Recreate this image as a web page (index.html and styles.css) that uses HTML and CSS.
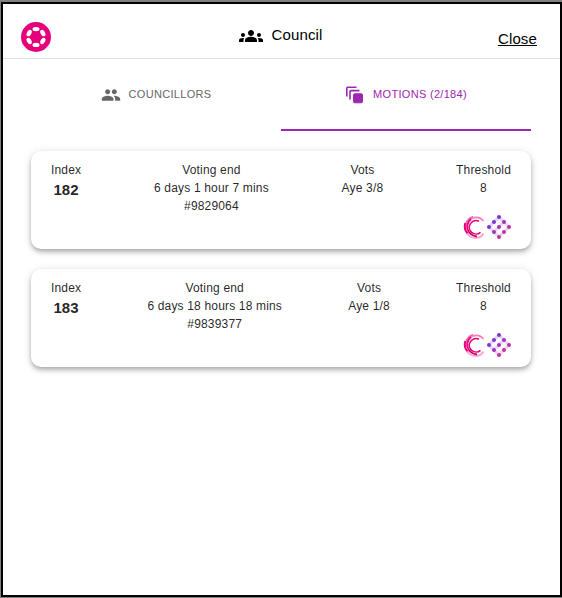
FILE: index.html
```html
<!DOCTYPE html>
<html lang="en">
<head>
<meta charset="utf-8">
<title>Council</title>
<link rel="stylesheet" href="styles.css">
</head>
<body>
<svg class="defs" width="0" height="0" aria-hidden="true">
  <defs>
    <linearGradient id="dots" gradientUnits="userSpaceOnUse" x1="4" y1="4" x2="20" y2="22">
      <stop offset="0" stop-color="#6a35e0"/><stop offset="1" stop-color="#d8358f"/>
    </linearGradient>
    <symbol id="crescent" viewBox="0 0 24 24">
      <g fill="none">
        <path d="M10 1.500A11 11 0 0 0 2.500 14" stroke="#f565ae" stroke-width="1.700"/>
        <path d="M2.300 8A11 11 0 0 0 5 19" stroke="#e6007a" stroke-width="1.900"/>
        <path d="M4 18.500C9 25 18 23.500 20.500 18.500" stroke="#fba6d2" stroke-width="2"/>
        <path d="M20.500 6A9.500 9.500 0 0 0 6 5.500" stroke="#f77dbb" stroke-width="1.600"/>
        <path d="M8 4A9.300 9.300 0 0 0 6 17" stroke="#e6007a" stroke-width="1.900"/>
        <path d="M6 17Q9 21 14 21.500" stroke="#b8005f" stroke-width="1.800"/>
        <path d="M16 6.300A6.700 6.700 0 1 0 17.500 17.300" stroke="#e6007a" stroke-width="1.600"/>
      </g>
    </symbol>
    <symbol id="lattice" viewBox="0 0 24 24">
      <path d="M12 2 2 12M12 2l5 5L7 17 2 12M17 7l5 5-10 10-5-5" fill="none" stroke="url(#dots)" stroke-width="3.200" opacity=".2"/>
      <g fill="url(#dots)">
        <circle cx="12" cy="2" r="2"/><circle cx="7" cy="7" r="2"/><circle cx="17" cy="7" r="2"/>
        <circle cx="2" cy="12" r="2"/><circle cx="12" cy="12" r="2"/><circle cx="22" cy="12" r="2"/>
        <circle cx="7" cy="17" r="2"/><circle cx="17" cy="17" r="2"/><circle cx="12" cy="22" r="2"/>
      </g>
    </symbol>
  </defs>
</svg>
<div class="popup">
  <header class="header">
    <svg class="logo" viewBox="0 0 30 30">
      <circle cx="15" cy="15" r="15" fill="#e6007a"/>
      <g fill="#fff">
        <ellipse id="petal" cx="15" cy="7.100" rx="3.500" ry="2.200"/>
        <use href="#petal" transform="rotate(60 15 15)"/>
        <use href="#petal" transform="rotate(120 15 15)"/>
        <use href="#petal" transform="rotate(180 15 15)"/>
        <use href="#petal" transform="rotate(240 15 15)"/>
        <use href="#petal" transform="rotate(300 15 15)"/>
      </g>
    </svg>
    <h1 class="title">
      <svg width="24" height="24" viewBox="0 0 24 24"><path d="M12 12.750c1.630 0 3.070.390 4.240.900 1.080.480 1.760 1.560 1.760 2.730V18H6v-1.610c0-1.180.680-2.260 1.760-2.730 1.170-.520 2.610-.910 4.240-.910zM4 13c1.100 0 2-.900 2-2s-.900-2-2-2-2 .900-2 2 .900 2 2 2zm1.130 1.100c-.370-.060-.740-.100-1.130-.100-.990 0-1.930.210-2.780.580C.480 14.900 0 15.620 0 16.430V18h4.500v-1.610c0-.830.230-1.610.630-2.290zM20 13c1.100 0 2-.900 2-2s-.900-2-2-2-2 .900-2 2 .900 2 2 2zm4 3.430c0-.810-.480-1.530-1.220-1.850-.850-.370-1.790-.580-2.780-.580-.390 0-.760.040-1.130.100.400.680.630 1.460.630 2.290V18H24v-1.570zM12 6c1.660 0 3 1.340 3 3s-1.340 3-3 3-3-1.340-3-3 1.340-3 3-3z"/></svg>
      <span>Council</span>
    </h1>
    <a class="close">Close</a>
  </header>
  <main class="content">
    <nav class="tabs">
      <div class="tab">
        <svg width="20" height="20" viewBox="0 0 24 24" fill="currentColor"><path d="M16 11c1.660 0 2.990-1.340 2.990-3S17.660 5 16 5s-3 1.340-3 3 1.340 3 3 3zm-8 0c1.660 0 2.990-1.340 2.990-3S9.660 5 8 5 5 6.340 5 8s1.340 3 3 3zm0 2c-2.330 0-7 1.170-7 3.500V19h14v-2.500c0-2.330-4.670-3.500-7-3.500zm8 0c-.290 0-.620.020-.970.050 1.160.840 1.970 1.970 1.970 3.450V19h6v-2.500c0-2.330-4.670-3.500-7-3.500z"/></svg>
        <span>COUNCILLORS</span>
      </div>
      <div class="tab active">
        <svg width="20" height="20" viewBox="0 0 20 20" fill="none" stroke="currentColor" stroke-width="1.600"><path d="M1.800 11.500V3Q1.800 2.300 2.500 2.300H11.500M5 14.500V6.500Q5 5.600 6 5.600H14.500"/><rect x="8.500" y="8.800" width="9" height="9" rx="1.300" fill="currentColor" stroke-width="1"/></svg>
        <span>MOTIONS (2/184)</span>
      </div>
    </nav>
    <article class="card">
      <div class="row">
        <div>Index<br><b>182</b></div>
        <div>Voting end<br>6 days 1 hour 7 mins<br>#9829064</div>
        <div>Vots<br>Aye 3/8</div>
        <div>Threshold<br>8</div>
      </div>
      <div class="votes">
        <svg width="24" height="24"><use href="#crescent"/></svg>
        <svg width="24" height="24"><use href="#lattice"/></svg>
      </div>
    </article>
    <article class="card">
      <div class="row">
        <div>Index<br><b>183</b></div>
        <div>Voting end<br>6 days 18 hours 18 mins<br>#9839377</div>
        <div>Vots<br>Aye 1/8</div>
        <div>Threshold<br>8</div>
      </div>
      <div class="votes">
        <svg width="24" height="24"><use href="#crescent"/></svg>
        <svg width="24" height="24"><use href="#lattice"/></svg>
      </div>
    </article>
  </main>
</div>
</body>
</html>
```
FILE: styles.css
```css
* { box-sizing: border-box; }
body {
  margin: 0;
  height: 598px;
  padding: 2px 0 1px 1px;
  background: #808080;
  font-family: "Liberation Sans", Arial, sans-serif;
  overflow: hidden;
}
.defs { position: absolute; }
.popup {
  height: 595px;
  border: 2px solid #000;
  background: #fff;
}
.header {
  display: grid;
  grid-template-columns: 1fr auto 1fr;
  height: 55px;
  padding: 0 23px 0 18px;
  border-bottom: 1px solid #e0e0e0;
}
.logo { width: 30px; height: 30px; margin-top: 18px; }
.title {
  display: flex;
  gap: 8px;
  margin: 20px 0 0 4px;
  font-size: 15px;
  font-weight: 400;
  line-height: 22px;
  letter-spacing: .14px;
}
.close {
  justify-self: end;
  margin-top: 26px;
  font-size: 15px;
  line-height: 18px;
  letter-spacing: .14px;
  text-decoration: underline;
}
.content { padding: 0 29px 0 28px; }
.tabs {
  display: grid;
  grid-template-columns: 1fr 1fr;
  height: 72px;
  margin-bottom: 20px;
}
.tab {
  display: flex;
  justify-content: center;
  gap: 8px;
  padding-top: 26px;
  border-bottom: 2px solid transparent;
  color: #666;
  font-size: 11px;
  line-height: 18px;
  letter-spacing: .31px;
}
.active { color: #9c27b0; border-color: #9c27b0; }
.card {
  display: flex;
  flex-direction: column;
  justify-content: space-between;
  height: 98px;
  margin-bottom: 20px;
  padding: 10px 20px;
  border-radius: 10px;
  color: rgba(0, 0, 0, .87);
  font-size: 12px;
  line-height: 18px;
  letter-spacing: .17px;
  text-align: center;
  box-shadow: 0 2px 4px -1px rgba(0,0,0,.2), 0 4px 5px rgba(0,0,0,.14), 0 1px 10px rgba(0,0,0,.12);
}
.row { display: flex; justify-content: space-between; }
.row b { font-size: 15px; line-height: 22px; letter-spacing: .14px; }
.votes { display: flex; justify-content: flex-end; height: 24px; }
```
